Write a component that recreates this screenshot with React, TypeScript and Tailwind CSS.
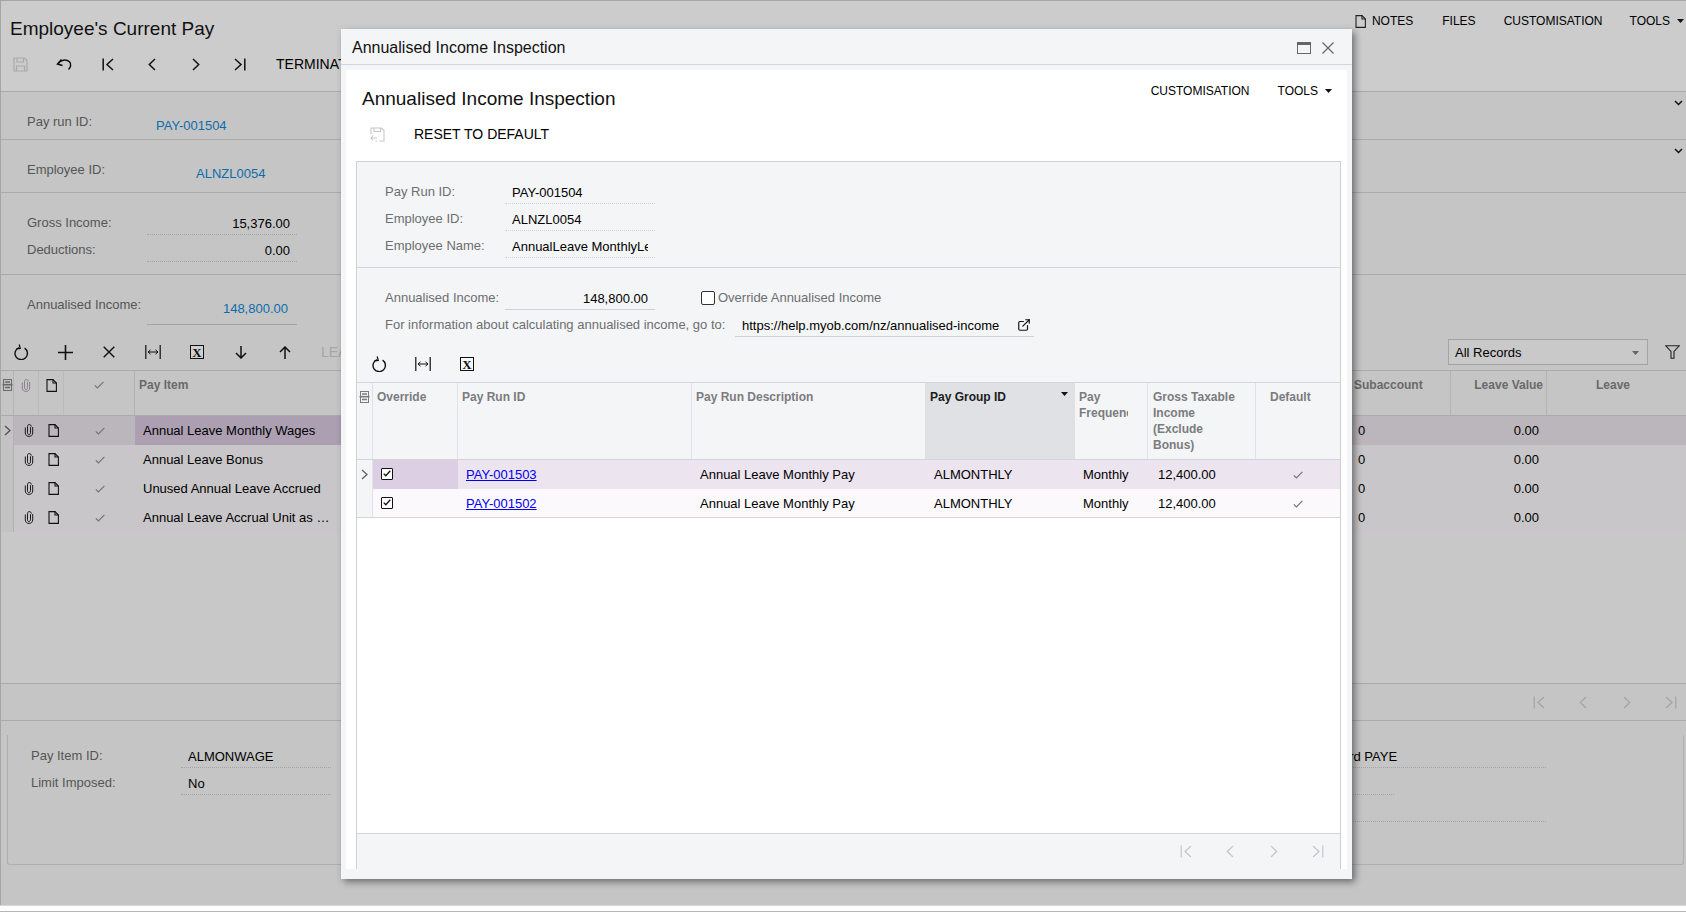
import React from "react";
import { ExternalLink } from "lucide-react";

type P = { c?: string };

const Save = ({ c = "#a8a9a8" }: P) => (
  <svg width="15" height="15" viewBox="0 0 15 15" fill="none" stroke={c} strokeWidth="1.2">
    <path d="M1 1H11.5L14 3.5V14H1Z" />
    <path d="M4 1V5H10.5V1" />
    <path d="M3.5 14V9H11.5V14" />
  </svg>
);
const SaveReset = ({ c = "#c6c7c9" }: P) => (
  <svg width="15" height="15" viewBox="0 0 15 15" fill="none" stroke={c} strokeWidth="1.1">
    <path d="M1 7V1H11.5L14 3.5V14H9" />
    <path d="M4 1V4.5H10.5V1" />
    <path d="M1 11H7M3 8.5L1 11L3 13.5" />
    <path d="M5.5 14H7" />
  </svg>
);
const Undo = () => (
  <svg width="16" height="13" viewBox="0 0 16 13" fill="none" stroke="#111" strokeWidth="1.5">
    <path d="M5.5 1.5L1.5 6L6.5 7.5" />
    <path d="M2 5.8C4.5 1.5 10.5 1 13.5 3.8C15.5 6 14.8 9.5 12.5 11.5" />
  </svg>
);
const First = ({ c = "#111", w = 1.5 }: { c?: string; w?: number }) => (
  <svg width="12" height="13" viewBox="0 0 12 13" fill="none" stroke={c} strokeWidth={w}>
    <path d="M1.2 .5V12.5M11 1L5 6.5L11 12" />
  </svg>
);
const Last = ({ c = "#111", w = 1.5 }: { c?: string; w?: number }) => (
  <svg width="12" height="13" viewBox="0 0 12 13" fill="none" stroke={c} strokeWidth={w}>
    <path d="M10.8 .5V12.5M1 1L7 6.5L1 12" />
  </svg>
);
const Prev = ({ c = "#111", w = 1.5 }: { c?: string; w?: number }) => (
  <svg width="8" height="13" viewBox="0 0 8 13" fill="none" stroke={c} strokeWidth={w}>
    <path d="M7 1L1.3 6.5L7 12" />
  </svg>
);
const Next = ({ c = "#111", w = 1.5 }: { c?: string; w?: number }) => (
  <svg width="8" height="13" viewBox="0 0 8 13" fill="none" stroke={c} strokeWidth={w}>
    <path d="M1 1L6.7 6.5L1 12" />
  </svg>
);
const Refresh = () => (
  <svg width="15" height="16" viewBox="0 0 15 16" fill="none" stroke="#111" strokeWidth="1.4">
    <path d="M5 3.6A6.2 6.2 0 1 0 10.6 4.2" />
    <path d="M5.2 .5L6.2 4.4L2.4 4.8" strokeWidth="1.3" />
  </svg>
);
const Plus = () => (
  <svg width="15" height="15" viewBox="0 0 15 15" stroke="#111" strokeWidth="1.6">
    <path d="M0 7.5H15M7.5 0V15" />
  </svg>
);
const Cross = () => (
  <svg width="12" height="12" viewBox="0 0 12 12" stroke="#111" strokeWidth="1.4">
    <path d="M.7 .7L11.3 11.3M11.3 .7L.7 11.3" />
  </svg>
);
const Fit = () => (
  <svg width="16" height="14" viewBox="0 0 16 14" fill="none" stroke="#111">
    <path d="M.8 0V14M15.2 0V14" strokeWidth="1.2" />
    <path d="M3 7H13M5.5 4.8L3 7L5.5 9.2M10.5 4.8L13 7L10.5 9.2" strokeWidth="1" />
  </svg>
);
const Excel = () => (
  <span className="flex h-[14px] w-[14px] items-center justify-center border-[1.5px] border-[#111] bg-white/20 font-['Liberation_Serif',serif] text-[13px] leading-none font-bold text-[#111]">
    X
  </span>
);
const Down = () => (
  <svg width="12" height="13" viewBox="0 0 12 13" fill="none" stroke="#111" strokeWidth="1.5">
    <path d="M6 0V12M1 7L6 12L11 7" />
  </svg>
);
const Up = () => (
  <svg width="12" height="13" viewBox="0 0 12 13" fill="none" stroke="#111" strokeWidth="1.5">
    <path d="M6 13V1M1 6L6 1L11 6" />
  </svg>
);
const Clip = ({ c = "#1a1a1a" }: P) => (
  <svg width="10" height="13" viewBox="0 0 10 13" fill="none" stroke={c} strokeWidth="1">
    <path d="M6.5 3.2V8.8C6.5 10 5.9 10.5 5 10.5C4.1 10.5 3.5 10 3.5 8.8V2.6C3.5 1.3 4.2 .6 5.2 .6C6.6 .6 7.3 1.4 7.3 2.6" />
    <path d="M8.7 3V9C8.7 11 7.2 12.4 5 12.4C2.8 12.4 1.3 11 1.3 9V3.5" />
  </svg>
);
const Note = ({ c = "#111" }: P) => (
  <svg width="11" height="13" viewBox="0 0 11 13" fill="none" stroke={c} strokeWidth="1.1">
    <path d="M1 .6H7L10.4 4V12.4H1Z" />
    <path d="M7 .6V4H10.4" />
  </svg>
);
const Tick = ({ c = "#757575" }: P) => (
  <svg width="10" height="8" viewBox="0 0 10 8" fill="none" stroke={c} strokeWidth="1.2">
    <path d="M.8 4.4L3.4 7L9.4 .8" />
  </svg>
);
const Cols = ({ c = "#6a6a6a" }: P) => (
  <svg width="11" height="12" viewBox="0 0 11 12" fill="none" stroke={c}>
    <rect x="1.5" y=".5" width="8" height="11" />
    <path d="M3 3H8M3 8.5H8" strokeWidth="1.4" />
    <path d="M.5 5.7H10.5" strokeWidth="1.6" />
  </svg>
);
const Chev = ({ c = "#444" }: P) => (
  <svg width="7" height="11" viewBox="0 0 7 11" fill="none" stroke={c} strokeWidth="1.4">
    <path d="M1 1L6 5.5L1 10" />
  </svg>
);
const ChevD = () => (
  <svg width="9" height="6" viewBox="0 0 9 6" fill="none" stroke="#111" strokeWidth="1.5">
    <path d="M1 1L4.5 4.5L8 1" />
  </svg>
);
const Caret = ({ c = "#111" }: P) => (
  <svg width="7" height="4" viewBox="0 0 7 4" fill={c}>
    <path d="M0 0H7L3.5 4Z" />
  </svg>
);
const Funnel = () => (
  <svg width="15" height="14" viewBox="0 0 15 14" fill="none" stroke="#222" strokeWidth="1.1">
    <path d="M.8 .8H14.2L9 6.5V13.2H6V6.5Z" />
  </svg>
);
const CheckBox = () => (
  <span className="flex h-[12px] w-[12px] items-center justify-center rounded-[1px] border border-[#111] bg-white">
    <svg width="8" height="7" viewBox="0 0 8 7" fill="none" stroke="#111" strokeWidth="1.3">
      <path d="M.7 3.6L2.8 5.7L7.3 .7" />
    </svg>
  </span>
);

const Btn = ({ children, className = "" }: { children: React.ReactNode; className?: string }) => (
  <span className={`flex h-[18px] w-[44px] shrink-0 items-center justify-center ${className}`}>{children}</span>
);

const Field = ({
  label,
  value,
  labelW,
  labelClass,
  right,
  solid,
  boxClass = "",
}: {
  label: string;
  value: string;
  labelW: string;
  labelClass: string;
  right?: boolean;
  solid?: boolean;
  boxClass?: string;
}) => (
  <div className="flex h-[27px]">
    <span className={`shrink-0 pt-[7px] leading-[16px] whitespace-nowrap ${labelW} ${labelClass}`}>{label}</span>
    <span
      className={`block h-[27px] w-[150px] shrink-0 px-[7px] pt-[8px] leading-[16px] whitespace-nowrap text-black ${
        right ? "text-right" : ""
      } ${solid ? "border-b border-solid" : "border-b border-dotted"} ${boxClass}`}
    >
      <span className="block overflow-hidden">{value}</span>
    </span>
  </div>
);

const mainCols = "grid grid-cols-[13px_25px_25px_71px_206px_1011px_99px_96px_139px]";
const MainRow = ({ label, selected }: { label: string; selected?: boolean }) => {
  const bg = selected ? "bg-[#bbb6bc]" : "bg-[#c8c6c8]";
  const sep = selected ? "border-[#bbb6bc]" : "border-[#bdbcbd]";
  return (
    <div className={`${mainCols} h-[29px] border-b ${sep} items-stretch`}>
      <span className="flex items-center justify-center border-r border-[#b1b2b1] bg-[#c2c3c2]">
        {selected && <Chev c="#555" />}
      </span>
      <span className={`flex items-center justify-center pl-[4px] ${bg}`}>
        <Clip />
      </span>
      <span className={`flex items-center justify-center pl-[4px] ${bg}`}>
        <Note />
      </span>
      <span className={`flex items-center justify-center ${bg}`}>
        <Tick />
      </span>
      <span
        className={`truncate pr-[10px] pl-[8px] leading-[29px] text-black ${selected ? "bg-[#ab9fb1]" : "bg-[#c8c6c8]"}`}
      >
        {label}
      </span>
      <span className={bg} />
      <span className={`pl-[6px] leading-[29px] text-black ${bg}`}>0</span>
      <span className={`pr-[8px] text-right leading-[29px] text-black ${bg}`}>0.00</span>
      <span className={bg} />
    </div>
  );
};

const modalCols = "grid grid-cols-[16px_85px_234px_233px_150px_73px_108px_84px]";
const ModalRow = ({ id, selected }: { id: string; selected?: boolean }) => {
  const bg = selected ? "bg-[#ece4ef]" : "bg-[#fbf9fc]";
  return (
    <div className={`${modalCols} ${selected ? "h-[29px]" : "h-[28px]"} items-stretch text-black`}>
      <span className="flex items-center justify-center border-r border-[#e1e2e5] bg-[#f4f5f7]">
        {selected && <Chev c="#666" />}
      </span>
      <span className={`flex items-center pb-[2px] pl-[8px] ${selected ? "bg-[#dccee3]" : bg}`}>
        <CheckBox />
      </span>
      <span className={`pl-[8px] leading-[29px] ${bg}`}>
        <span className="text-[#0000ee] underline">{id}</span>
      </span>
      <span className={`pl-[8px] leading-[29px] ${bg}`}>Annual Leave Monthly Pay</span>
      <span className={`pl-[9px] leading-[29px] ${bg}`}>ALMONTHLY</span>
      <span className={`${bg} pl-[8px] leading-[29px]`}>
        <span className="block w-[46px] overflow-hidden">Monthly</span>
      </span>
      <span className={`pl-[10px] leading-[29px] ${bg}`}>12,400.00</span>
      <span className={`flex items-center justify-center ${bg}`}>
        <Tick />
      </span>
    </div>
  );
};

const headCell = "px-[4px] pt-[6px] text-[12px] leading-[16px] font-bold";

function Modal() {
  const lab = "text-[#6d6e70]";
  return (
    <div className="absolute top-[29px] left-[341px] flex h-[850px] w-[1011px] flex-col bg-[#f4f5f7] text-[13px] shadow-[3px_3px_7px_rgba(0,0,0,0.45)]">
      <div className="flex h-[36px] shrink-0 items-center justify-between border-b border-[#d4d5d8] pt-[3px] pr-[18px] pl-[11px] text-[16px] text-[#111]">
        <span>Annualised Income Inspection</span>
        <span className="flex items-center gap-[11px]">
          <span className="h-[12px] w-[14px] border border-t-[3px] border-[#666]" />
          <svg width="12" height="12" viewBox="0 0 12 12" stroke="#666" strokeWidth="1.2">
            <path d="M.5 .5L11.5 11.5M11.5 .5L.5 11.5" />
          </svg>
        </span>
      </div>
      <div className="mx-[5px] mt-[5px] flex h-[799px] flex-col bg-white">
        <div className="flex h-[91px] shrink-0 flex-col">
          <div className="flex h-[38px] items-start justify-between pt-[13px] pr-[15px] pl-[16px]">
            <span className="mt-[4px] text-[19px] leading-[24px] text-[#111]">Annualised Income Inspection</span>
            <span className="flex items-center text-[12px] leading-[16px] text-black">
              <span>CUSTOMISATION</span>
              <span className="ml-[28px]">TOOLS</span>
              <span className="ml-[7px]">
                <Caret />
              </span>
            </span>
          </div>
          <div className="mt-[17px] flex h-[18px] items-center pl-[9px] text-[14px]">
            <Btn>
              <SaveReset />
            </Btn>
            <span className="ml-[15px] text-black">RESET TO DEFAULT</span>
          </div>
        </div>
        <div className="mr-[6px] ml-[10px] flex flex-1 flex-col border-x border-t border-[#cfd0d3] bg-[#f4f5f7]">
          <div className="h-[106px] shrink-0 border-b border-[#d4d5d8] pt-[15px] pl-[28px]">
            <Field label="Pay Run ID:" value="PAY-001504" labelW="w-[120px]" labelClass={lab} boxClass="border-[#d0d1d4]" />
            <Field label="Employee ID:" value="ALNZL0054" labelW="w-[120px]" labelClass={lab} boxClass="border-[#d0d1d4]" />
            <Field
              label="Employee Name:"
              value="AnnualLeave MonthlyLeave"
              labelW="w-[120px]"
              labelClass={lab}
              boxClass="border-[#d0d1d4]"
            />
          </div>
          <div className="shrink-0 pt-[15px] pl-[28px]">
            <div className="flex">
              <Field
                label="Annualised Income:"
                value="148,800.00"
                labelW="w-[120px]"
                labelClass={lab}
                right
                solid
                boxClass="border-[#d0d1d4]"
              />
              <span className="mt-[8px] ml-[46px] h-[14px] w-[14px] rounded-[2px] border border-[#333] bg-white" />
              <span className={`ml-[3px] pt-[7px] leading-[16px] ${lab}`}>Override Annualised Income</span>
            </div>
            <div className="flex h-[27px]">
              <span className={`w-[350px] shrink-0 pt-[7px] leading-[16px] whitespace-nowrap ${lab}`}>
                For information about calculating annualised income, go to:
              </span>
              <span className="flex h-[27px] w-[299px] justify-between border-b border-[#d0d1d4] pt-[8px] pr-[3px] pl-[7px] leading-[16px] whitespace-nowrap text-black">
                <span>https://help.myob.com/nz/annualised-income</span>
                <ExternalLink size={14} strokeWidth={2} color="#111" />
              </span>
            </div>
          </div>
          <div className="flex h-[45px] shrink-0 pt-[18px]">
            <Btn>
              <Refresh />
            </Btn>
            <Btn>
              <Fit />
            </Btn>
            <Btn>
              <Excel />
            </Btn>
          </div>
          <div className={`${modalCols} h-[78px] shrink-0 border-y border-[#d4d5d8] text-[#7b7c7e]`}>
            <span className="flex justify-center border-r border-[#e1e2e5] pt-[8px]">
              <Cols c="#7b7c7e" />
            </span>
            <span className={`${headCell} border-r border-[#e1e2e5]`}>Override</span>
            <span className={`${headCell} border-r border-[#e1e2e5]`}>Pay Run ID</span>
            <span className={`${headCell}`}>Pay Run Description</span>
            <span className={`${headCell} flex justify-between bg-[#dfe1e5] pr-[7px] pl-[5px] text-[#1c1c1c]`}>
              <span>Pay Group ID</span>
              <span className="pt-[3px]">
                <Caret />
              </span>
            </span>
            <span className={`${headCell} border-r border-[#e1e2e5]`}>
              <span className="block w-[49px] overflow-hidden">Pay Frequency</span>
            </span>
            <span className={`${headCell} border-r border-[#e1e2e5] pl-[5px]`}>
              Gross Taxable
              <br />
              Income
              <br />
              (Exclude
              <br />
              Bonus)
            </span>
            <span className={`${headCell} pl-[14px]`}>Default</span>
          </div>
          <ModalRow id="PAY-001503" selected />
          <ModalRow id="PAY-001502" />
          <div className="h-[316px] shrink-0 border-t border-[#d4d5d8] bg-white" />
          <div className="flex flex-1 items-center justify-end border-t border-[#d4d5d8]">
            <Btn>
              <First c="#c4c5c8" w={1.2} />
            </Btn>
            <Btn>
              <Prev c="#c4c5c8" w={1.2} />
            </Btn>
            <Btn>
              <Next c="#c4c5c8" w={1.2} />
            </Btn>
            <Btn>
              <Last c="#c4c5c8" w={1.2} />
            </Btn>
          </div>
        </div>
      </div>
    </div>
  );
}

export default function App() {
  const lab = "text-[#565656]";
  const line = "border-[#a9aaa9]";
  const dot = "border-[#a3a4a3]";
  return (
    <div className="relative h-[912px] w-[1686px] overflow-hidden bg-white font-['Liberation_Sans',Arial,sans-serif] text-[13px]">
      <div className="flex h-[905px] flex-col border-t border-l border-[#a5a6a5] bg-[#c4c5c4]">
        {/* page header */}
        <div className={`flex h-[91px] shrink-0 border-b ${line} bg-[#cccccc]`}>
          <div className="flex flex-1 flex-col">
            <div className="pt-[16px] pl-[9px] text-[19px] leading-[24px] text-[#111]">Employee's Current Pay</div>
            <div className="mt-[14px] -ml-[3px] flex h-[18px] items-center">
              <Btn>
                <Save />
              </Btn>
              <Btn>
                <Undo />
              </Btn>
              <Btn>
                <First />
              </Btn>
              <Btn>
                <Prev />
              </Btn>
              <Btn>
                <Next />
              </Btn>
              <Btn>
                <Last />
              </Btn>
              <span className="ml-[14px] text-[14px] text-black">TERMINATE</span>
            </div>
          </div>
          <div className="mt-[12px] flex h-[16px] items-center pr-[2px] text-[12px] leading-[16px] text-black">
            <Note c="#222" />
            <span className="ml-[6px]">NOTES</span>
            <span className="ml-[29px]">FILES</span>
            <span className="ml-[28px]">CUSTOMISATION</span>
            <span className="ml-[27px]">TOOLS</span>
            <span className="ml-[7px]">
              <Caret />
            </span>
          </div>
        </div>
        {/* summary sections */}
        <div className={`flex h-[48px] shrink-0 border-b ${line} pl-[26px]`}>
          <span className={`mt-[22px] w-[129px] leading-[16px] ${lab}`}>Pay run ID:</span>
          <span className="mt-[26px] leading-[16px] text-[#0f6cab]">PAY-001504</span>
          <span className="mt-[8px] mr-[3px] ml-auto">
            <ChevD />
          </span>
        </div>
        <div className={`flex h-[53px] shrink-0 border-b ${line} pl-[26px]`}>
          <span className={`mt-[22px] w-[169px] leading-[16px] ${lab}`}>Employee ID:</span>
          <span className="mt-[26px] leading-[16px] text-[#0f6cab]">ALNZL0054</span>
          <span className="mt-[8px] mr-[3px] ml-auto">
            <ChevD />
          </span>
        </div>
        <div className={`h-[82px] shrink-0 border-b ${line} pt-[15px] pl-[26px]`}>
          <Field label="Gross Income:" value="15,376.00" labelW="w-[120px]" labelClass={lab} right boxClass={dot} />
          <Field label="Deductions:" value="0.00" labelW="w-[120px]" labelClass={lab} right boxClass={dot} />
        </div>
        <div className={`h-[96px] shrink-0 border-b ${line}`}>
          <div className="flex pl-[26px]">
            <span className={`mt-[22px] w-[120px] leading-[16px] whitespace-nowrap ${lab}`}>Annualised Income:</span>
            <span className="h-[50px] w-[150px] border-b border-[#a3a4a3] pt-[26px] pr-[9px] text-right leading-[16px] text-[#0f6cab]">
              148,800.00
            </span>
          </div>
          <div className="mt-[18px] -ml-[2px] flex h-[18px] items-center">
            <Btn>
              <Refresh />
            </Btn>
            <Btn>
              <Plus />
            </Btn>
            <Btn>
              <Cross />
            </Btn>
            <Btn>
              <Fit />
            </Btn>
            <Btn>
              <Excel />
            </Btn>
            <Btn>
              <Down />
            </Btn>
            <Btn>
              <Up />
            </Btn>
            <span className="ml-[14px] text-[14px] text-[#a4a5a4]">LEAVE</span>
            <div className="mr-[6px] ml-auto flex items-center">
              <span className="flex h-[26px] w-[200px] items-center justify-between border border-[#a3a4a3] bg-[#c8c9c8] pt-[1px] pr-[8px] pl-[6px] text-black">
                All Records
                <Caret c="#666" />
              </span>
              <span className="ml-[17px] flex w-[15px]">
                <Funnel />
              </span>
            </div>
          </div>
        </div>
        {/* main grid */}
        <div className={`${mainCols} h-[45px] shrink-0 border-b ${line} text-[#6a6a6a]`}>
          <span className="flex justify-center border-r border-[#b1b2b1] pt-[8px]">
            <Cols />
          </span>
          <span className="flex justify-center border-r border-[#b9bab9] pt-[8px]">
            <Clip c="#8b7f8b" />
          </span>
          <span className="flex justify-center border-r border-[#b9bab9] pt-[8px]">
            <Note />
          </span>
          <span className="flex justify-center border-r border-[#b1b2b1] pt-[10px]">
            <Tick />
          </span>
          <span className={headCell}>Pay Item</span>
          <span />
          <span className={`${headCell} border-r border-[#b1b2b1] pl-[2px]`}>Subaccount</span>
          <span className={`${headCell} border-r border-[#b1b2b1] pr-[3px] text-right`}>Leave Value</span>
          <span className={`${headCell} pl-[49px]`}>Leave</span>
        </div>
        <div className="shrink-0">
          <MainRow label="Annual Leave Monthly Wages" selected />
          <MainRow label="Annual Leave Bonus" />
          <MainRow label="Unused Annual Leave Accrued" />
          <MainRow label="Annual Leave Accrual Unit as Hours Worked" />
        </div>
        <div className={`h-[152px] shrink-0 border-b ${line} bg-[#c8c8c8]`} />
        <div className={`-mr-[7px] flex h-[37px] shrink-0 items-center justify-end border-b ${line}`}>
          <Btn>
            <First c="#a3a4a3" w={1.2} />
          </Btn>
          <Btn>
            <Prev c="#a3a4a3" w={1.2} />
          </Btn>
          <Btn>
            <Next c="#a3a4a3" w={1.2} />
          </Btn>
          <Btn>
            <Last c="#a3a4a3" w={1.2} />
          </Btn>
        </div>
        {/* details group */}
        <div className="flex-1 pt-[14px] pr-[2px] pl-[6px]">
          <div className="flex h-[130px] justify-between rounded-b-[3px] border-x border-b border-[#aeafae] pt-[6px] pl-[23px]">
            <div>
              <Field label="Pay Item ID:" value="ALMONWAGE" labelW="w-[150px]" labelClass={lab} boxClass={dot} />
              <Field label="Limit Imposed:" value="No" labelW="w-[150px]" labelClass={lab} boxClass={dot} />
            </div>
            <div className="mr-[137px] flex w-[400px] flex-col">
              <span
                className={`block h-[27px] border-b border-dotted ${dot} pt-[8px] pl-[162px] leading-[16px] whitespace-nowrap text-black`}
              >
                Standard PAYE
              </span>
              <span className={`block h-[27px] w-[248px] border-b border-dotted ${dot}`} />
              <span className={`block h-[27px] border-b border-dotted ${dot}`} />
            </div>
          </div>
        </div>
      </div>
      <div className="h-[1px] bg-[#d8d8d8]" />
      <div className="h-[5px] bg-white" />
      <div className="h-[1px] bg-[#b5b6b5]" />
      <Modal />
    </div>
  );
}
